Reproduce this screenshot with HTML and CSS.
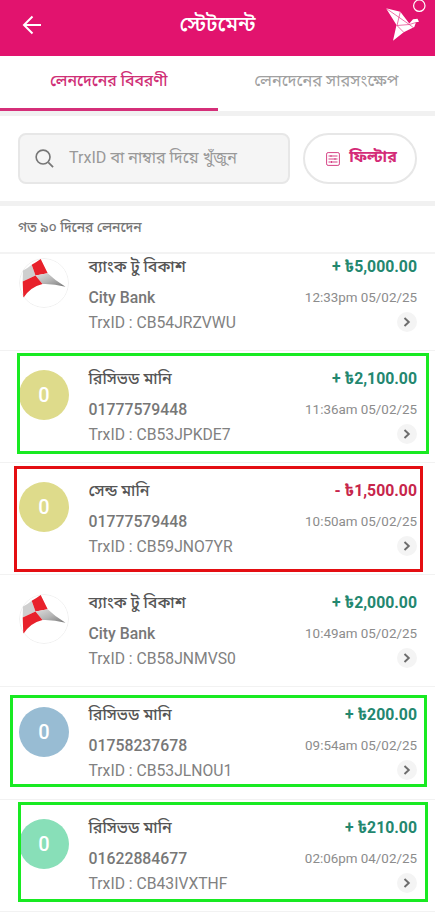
FILE: index.html
```
<!DOCTYPE html>
<html lang="bn">
<head>
<meta charset="utf-8">
<title>স্টেটমেন্ট</title>
<link rel="stylesheet" href="styles.css">
</head>
<body>
<svg width="0" height="0" class="defs">
  <defs>
    <linearGradient id="silver" x1="0" y1="0" x2="1" y2="1"><stop offset="0" stop-color="#dedede"/><stop offset=".5" stop-color="#b5b5b5"/><stop offset="1" stop-color="#777"/></linearGradient>
    <symbol id="bank" viewBox="0 0 50 50">
      <circle cx="25" cy="25" r="24.500" fill="#fff" stroke="#f0f0f0"/>
      <path d="M4 12.500Q9 10 12.700 6.700L16.500 17.500 3.700 23.500Z" fill="#cfcfcf"/>
      <path d="M12.700 6.700Q17 4.500 21.700 1L28.700 15.300 16.500 17.500Z" fill="#e8212b"/>
      <path d="M28.700 15.300Q36 22.500 46.500 28.800 34 25.500 23.500 26L16.500 17.500Z" fill="url(#silver)"/>
      <path d="M3.700 23.500 16.500 17.500 23.500 26Q11 29 4.300 40Z" fill="#e8212b"/>
    </symbol>
    <symbol id="chev" viewBox="0 0 20 20">
      <circle cx="10" cy="10" r="10" fill="#f4f4f4"/>
      <path d="m7.500 6 4.300 4-4.300 4" fill="none" stroke="#6c6c6c" stroke-width="1.900"/>
    </symbol>
  </defs>
</svg>
<div class="app">
  <header class="bar">
    <svg class="back" viewBox="0 0 20 20"><path d="M19 10H2M10.500 1.500 2 10l8.500 8.500" fill="none" stroke="#fff" stroke-width="2"/></svg>
    <h1>স্টেটমেন্ট</h1>
    <svg class="bird" viewBox="0 0 50 56">
      <path d="M4 8.300 18.300 11.700 27.300 23.500 31 19.300 35.500 18.800 37 21.700 34 22.300 32.300 27 21.700 32.300 11 40.700 14.500 25Z" fill="#fff"/>
      <path d="M4 8.300 27.300 24.500M18.300 11.700 15 25.500 27.300 24.500 34 22.500M15 25.500l6.700 6.800M27.300 24.500l4 3" fill="none" stroke="#e2136e" stroke-width=".6"/>
      <circle cx="37.300" cy="5.700" r="5.700" fill="none" stroke="#fff" stroke-width="1.200"/>
    </svg>
  </header>
  <nav class="tabs"><span class="tab on">লেনদেনের বিবরণী</span><span class="tab">লেনদেনের সারসংক্ষেপ</span></nav>
  <section class="tools">
    <div class="search">
      <svg viewBox="0 0 20 20"><circle cx="8.500" cy="8.500" r="7.300" fill="none" stroke="#777" stroke-width="1.700"/><path d="m14 14 5 5" stroke="#777" stroke-width="1.900"/></svg>
      <span>TrxID বা নাম্বার দিয়ে খুঁজুন</span>
    </div>
    <div class="filter">
      <svg viewBox="0 0 14 14"><rect x=".6" y=".6" width="12.800" height="12.800" rx="1.500"/><path d="M2.500 4h9M2.500 7h9M2.500 10h9M5 3v2M9 6v2M5.500 9v2"/></svg>
      <span>ফিল্টার</span>
    </div>
  </section>
  <h2 class="period">গত ৯০ দিনের লেনদেন</h2>
  <main class="list">
    <article class="row first">
      <svg class="avatar"><use href="#bank"/></svg>
      <div class="info"><b>ব্যাংক টু বিকাশ</b><strong>City Bank</strong><span>TrxID : CB54JRZVWU</span></div>
      <div class="side"><b>+ ৳5,000.00</b><time>12:33pm 05/02/25</time><svg><use href="#chev"/></svg></div>
    </article>
    <article class="row">
      <div class="avatar yellow">0</div>
      <div class="info"><b>রিসিভড মানি</b><strong>01777579448</strong><span>TrxID : CB53JPKDE7</span></div>
      <div class="side"><b>+ ৳2,100.00</b><time>11:36am 05/02/25</time><svg><use href="#chev"/></svg></div>
      <i class="mark m1"></i>
    </article>
    <article class="row">
      <div class="avatar yellow">0</div>
      <div class="info"><b>সেন্ড মানি</b><strong>01777579448</strong><span>TrxID : CB59JNO7YR</span></div>
      <div class="side out"><b>- ৳1,500.00</b><time>10:50am 05/02/25</time><svg><use href="#chev"/></svg></div>
      <i class="mark m2"></i>
    </article>
    <article class="row">
      <svg class="avatar"><use href="#bank"/></svg>
      <div class="info"><b>ব্যাংক টু বিকাশ</b><strong>City Bank</strong><span>TrxID : CB58JNMVS0</span></div>
      <div class="side"><b>+ ৳2,000.00</b><time>10:49am 05/02/25</time><svg><use href="#chev"/></svg></div>
    </article>
    <article class="row">
      <div class="avatar blue">0</div>
      <div class="info"><b>রিসিভড মানি</b><strong>01758237678</strong><span>TrxID : CB53JLNOU1</span></div>
      <div class="side"><b>+ ৳200.00</b><time>09:54am 05/02/25</time><svg><use href="#chev"/></svg></div>
      <i class="mark m3"></i>
    </article>
    <article class="row">
      <div class="avatar mint">0</div>
      <div class="info"><b>রিসিভড মানি</b><strong>01622884677</strong><span>TrxID : CB43IVXTHF</span></div>
      <div class="side"><b>+ ৳210.00</b><time>02:06pm 04/02/25</time><svg><use href="#chev"/></svg></div>
      <i class="mark m4"></i>
    </article>
  </main>
</div>
</body>
</html>
```
FILE: styles.css
```
* { box-sizing: border-box; }
body { margin: 0; background: #fff; font-family: Roboto, "Noto Sans Bengali", "Noto Sans", sans-serif; color: #777; }
.defs { position: absolute; }
.app { height: 912px; overflow: hidden; display: flex; flex-direction: column; }
.bar { height: 56px; flex: none; background: #e2136e; display: grid; grid-template-columns: 50px 1fr 50px; align-items: center; }
.back { width: 20px; height: 20px; margin: -6px 0 0 22px; }
.bar h1 { margin: 0; color: #fff; font-size: 20.8px; font-weight: 500; line-height: 48px; height: 56px; text-align: center; white-space: nowrap; }
.bird { width: 50px; height: 56px; margin-left: -3px; }
.tabs { height: 60px; flex: none; display: grid; grid-template-columns: 1fr 1fr; border-bottom: 5px solid #f1f1f1; }
.tab { text-align: center; font-size: 16.3px; line-height: 50px; color: #a0a0a0; white-space: nowrap; }
.tab.on { color: #cf2f76; font-size: 15.8px; font-weight: 500; border-bottom: 3px solid #d52f79; }
.tools { height: 90px; flex: none; border-bottom: 5px solid #f1f1f1; padding: 17px 18px 0; display: flex; gap: 13px; }
.search { width: 272px; height: 51px; border: 2px solid #e7e7e7; border-radius: 8px; background: #f5f5f5; display: flex; align-items: center; padding-left: 15px; gap: 15px; color: #999; font-size: 16.1px; line-height: 28px; white-space: nowrap; }
.search svg { width: 19px; height: 19px; flex: none; }
.search span { margin-top: -2px; }
.filter { width: 114px; height: 51px; border: 2px solid #e7e7e7; border-radius: 26px; display: flex; align-items: center; justify-content: center; gap: 9px; color: #d42b77; font-size: 16px; font-weight: 700; white-space: nowrap; padding-left: 3px; }
.filter svg { width: 14px; height: 14px; fill: none; stroke: #d54285; stroke-width: 1; }
.filter span { margin-top: -1px; }
.period { height: 48px; flex: none; margin: 0; padding-left: 18px; font-size: 13.8px; line-height: 43px; font-weight: 500; color: #777; border-bottom: 2px solid #f3f3f3; }
.list { flex: 1; overflow: hidden; }
.row { position: relative; height: 112.2px; padding: 16px 18px 0 19px; border-bottom: 1px solid #f2f2f2; display: flex; }
.row.first { margin-top: -15.4px; }
.avatar { width: 50px; height: 50px; flex: none; margin: 3.3px 20px 0 0; border-radius: 50%; color: #fff; font-size: 20px; font-weight: 500; line-height: 51px; text-align: center; }
.yellow { background: #dedb8b; }
.blue { background: #98bcd3; }
.mint { background: #88dfb8; }
.info, .side { display: flex; flex-direction: column; white-space: nowrap; line-height: 25px; font-size: 15.8px; }
.info { flex: 1; margin-left: -.5px; }
.info b, .side b { height: 24px; line-height: 24px; margin-bottom: 6px; }
.info b { color: #555; font-size: 16px; font-weight: 500; }
.info strong { font-size: 15.8px; font-weight: 500; color: #777; }
.info span { font-size: 15.7px; color: #818181; }
.side { align-items: flex-end; }
.side b { color: #23876f; font-weight: 700; }
.side.out b { color: #c7264b; }
.side time { font-size: 13.4px; color: #8c8c8c; }
.side svg { width: 20px; height: 20px; margin-top: 2px; }
.mark { position: absolute; border: 3px solid #18ea22; }
.m1 { left: 17px; right: 6px; top: 2px; height: 101px; }
.m2 { left: 14px; right: 12px; top: 3px; height: 106px; border-color: #e40e12; }
.m3 { left: 10px; right: 8px; top: 7.600px; height: 92px; }
.m4 { left: 18px; right: 7px; top: 2.400px; height: 100px; }
```
